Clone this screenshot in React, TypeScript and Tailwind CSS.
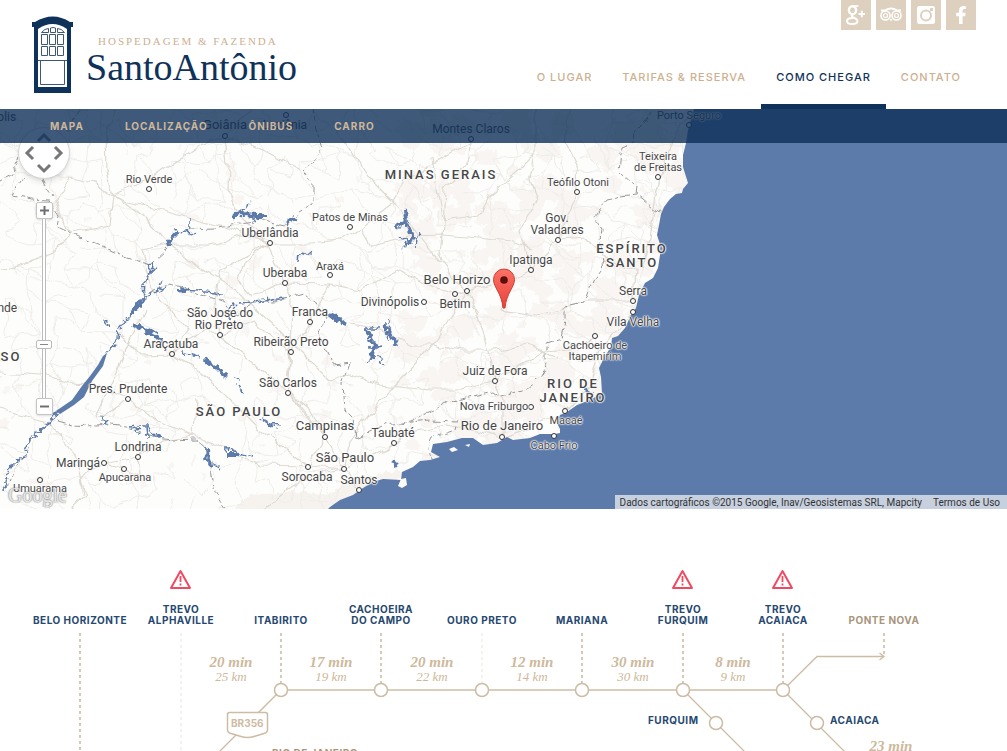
import React from "react";
import { FaFacebookF } from "react-icons/fa";

const MAP_TOP = 109;

function seeded(seed: number) {
  let s = seed;
  return () => {
    s = (s * 16807) % 2147483647;
    return s / 2147483647;
  };
}

function buildMinorRoads() {
  const rand = seeded(4127);
  const step = 17;
  const cols = 43;
  const rows = 25;
  const pts: number[][][] = [];
  for (let r = 0; r < rows; r++) {
    const row: number[][] = [];
    for (let c = 0; c < cols; c++) {
      row.push([
        Math.round(c * step + rand() * 15 - 7),
        Math.round(MAP_TOP + r * step + rand() * 15 - 7),
      ]);
    }
    pts.push(row);
  }
  let d = "";
  const link = (a: number[], b: number[]) => {
    const mx = Math.round((a[0] + b[0]) / 2 + rand() * 6 - 3);
    const my = Math.round((a[1] + b[1]) / 2 + rand() * 6 - 3);
    d += `M${a[0]} ${a[1]}Q${mx} ${my} ${b[0]} ${b[1]}`;
  };
  for (let r = 0; r < rows - 1; r++) {
    for (let c = 0; c < cols - 1; c++) {
      if (rand() < 0.5) link(pts[r][c], pts[r][c + 1]);
      if (rand() < 0.5) link(pts[r][c], pts[r + 1][c]);
      if (rand() < 0.22) link(pts[r][c], pts[r + 1][c + 1]);
    }
  }
  return d;
}

function buildTerrain() {
  const rand = seeded(991);
  let d = "";
  for (let i = 0; i < 330; i++) {
    const east = rand() < 0.86;
    const cx = east ? 400 + rand() * 290 : rand() * 400;
    const cy = MAP_TOP + rand() * 400;
    const size = east ? 5 + rand() * 14 : 3 + rand() * 6;
    for (let k = 0; k < 9; k++) {
      const a = (k / 9) * Math.PI * 2;
      const rr = size * (0.45 + rand() * 0.8);
      d += `${k === 0 ? "M" : "L"}${Math.round(cx + Math.cos(a) * rr)} ${Math.round(
        cy + Math.sin(a) * rr * 0.8,
      )}`;
    }
    d += "Z";
  }
  return d;
}

const MINOR_ROADS = buildMinorRoads();
const TERRAIN = buildTerrain();

const MAIN_ROADS = [
  "M114 109 106 135 107 170 113 194 127 202 150 207 190 217 230 228 270 243",
  "M113 194 146 218 165 240 200 268 235 290 270 322 300 350 330 380",
  "M113 194 95 183 70 178 55 200 65 225 72 232 110 225 113 194",
  "M0 272 30 262 52 252 70 237 72 232",
  "M113 194 150 180 170 165 195 148 225 133 240 120 250 109",
  "M225 136 228 165 227 190 240 215 265 240 285 283 292 300 290 350 288 392 310 420 325 437",
  "M225 136 250 145 262 150 300 170",
  "M270 243 310 243 340 240 360 228 390 205 405 180 430 165 471 140",
  "M270 243 245 262 238 280 252 295 285 283",
  "M285 283 331 284 360 290 400 270 425 285 455 294 467 291",
  "M471 140 470 160 445 190 443 225 440 255 455 280 467 291",
  "M360 228 370 245 410 236 443 235 480 238 510 242 532 250",
  "M467 291 500 283 531 270 558 240 578 193 577 165 565 140 570 109",
  "M558 240 585 238 610 262 635 270 633 300",
  "M467 291 480 320 490 355 495 381 503 400 503 437",
  "M467 291 450 320 432 345 405 375 380 400 350 440 344 469",
  "M344 469 385 450 410 432 445 425 480 432 503 437 530 428 565 412 590 385 600 350 620 325 633 313",
  "M344 469 325 437 309 466 344 469 360 489",
  "M344 469 310 475 280 495 265 509",
  "M325 437 300 405 288 393 291 352 310 322 331 284",
  "M220 335 250 360 280 385 310 410 325 437",
  "M172 354 200 372 225 395 260 430 309 466",
  "M118 333 140 355 172 354 205 330 220 335 252 320 290 352",
  "M128 399 105 415 95 418 112 380 130 340 145 310",
  "M128 399 155 420 194 435 230 450 260 465 309 466",
  "M104 463 138 457 165 440 194 435 196 400",
  "M104 463 80 480 85 495 70 509",
  "M138 457 140 475 125 470 104 463",
  "M0 372 40 375 70 383 90 384 128 399",
  "M0 410 50 423 75 455 82 495",
  "M172 354 190 330 160 300 148 280 140 250 168 245",
  "M168 245 210 245 240 235 270 243",
  "M270 243 220 270 215 300 220 335",
  "M330 120 370 180 395 205 430 250 442 262",
  "M432 157 438 195 443 220 480 215 490 195 520 170 535 155 535 109",
  "M535 155 530 180 537 200 520 230 531 270",
  "M350 325 380 330 410 345 432 345 460 350 495 350 530 345 560 360",
  "M495 381 460 390 430 390 380 385 350 375 330 380",
  "M495 381 520 365 545 352 570 350 595 337",
  "M660 178 655 200 650 240 640 270",
  "M694 109 675 135 660 178",
  "M510 275 500 310 535 315 560 310 590 300 633 300",
];

const STATE_BORDERS = [
  "M80 109 70 120 66 133 M20 158 10 175 0 181 M22 176 12 195 32 199 50 200 60 215 58 226 80 237 100 245 125 257 148 265 152 262 165 250 171 244 M43 179 52 197",
  "M190 229 215 228 230 224 265 220 285 228 300 212 312 205 312 185 304 172 322 150 316 128 313 109",
  "M151 270 145 281 145 298 160 288 170 285 190 290 225 302 235 315 260 301 285 299 305 293 315 302 325 320 320 335 325 350 332 365 350 363 343 385 345 410 355 420 357 437",
  "M357 437 385 425 410 422 430 412 450 402 470 398 495 392 502 397 525 389 540 377 547 365 547 343 562 338 565 320 565 307 585 303 593 280 605 263 600 240 602 228 595 217 607 200 622 197 637 195 662 215",
  "M637 195 638 188 619 170 622 147 632 143 634 133 645 122 652 112",
  "M430 460 428 447 432 438 455 430 457 422 430 421 400 424",
  "M58 420 72 424 95 425 112 424 130 427 155 437 175 439 195 438 207 448 210 470 212 480 214 492 225 509",
  "M32 437 23 457 14 470 8 490",
];

const THIN_RIVERS =
  "M4 490 10 467 23 457 32 437 50 423 58 410 M107 353 117 340 118 330 133 312 M145 298 144 281 151 270 M151 270 155 268 M148 266 152 272 153 262 M145 298 155 292 166 286 M190 229 190 219 M179 231 191 233 M191 232 194 236 M240 214 242 209 250 203 M178 289 205 292 222 294 M299 253 298 263 M229 318 232 304 240 305 M241 303 265 301 285 298 M300 252 312 254 M184 352 200 357 M184 350 185 358 M240 384 243 394 M240 380 234 378 M103 320 109 326 M130 427 137 426 148 426 152 434 163 436 M147 427 148 438 M137 427 138 434 M226 454 227 447 243 455 253 458 M260 418 269 423 278 426 M268 424 275 428 M390 321 387 340 M365 328 378 328 M370 348 383 346 M373 352 368 362 M374 355 386 365 M400 236 409 241 403 247 M419 233 416 245 M157 286 164 281 M101 417 108 424 M250 216 256 222 M207 456 202 460 M212 462 218 468";
const WIDE_RIVERS =
  "M232 218 240 212 245 215 256 216 268 216 M168 246 173 236 179 231 M286 223 294 217 M145 298 137 308 130 312 M178 289 189 290 M133 325 145 330 155 336 163 341 M203 359 212 364 227 377 M384 325 391 335 396 344 M366 329 370 337 M370 338 375 345 372 360 M207 447 208 460 212 468 M226 455 240 455 M330 313 345 324 M392 460 397 468 M405 210 406 221 396 228 M406 222 413 237 410 244 M585 391 591 393 590 400";

const COAST =
  "M694 109 691 120 688 130 686 143 683 155 683 167 688 183 683 189 682 193 676 194 670 199 664 207 661 214 659 225 657 235 660 244 660 255 658 268 653 278 645 283 639 295 636 308 631 315 625 328 618 336 612 338 611 347 603 359 602 362 599 368 601 377 602 393 590 400 577 405 567 412 560 415 557 423 560 429 560 433 555 434 540 434 530 438 513 440 507 437 497 443 483 445 473 438 462 438 447 442 433 444 431 452 440 457 430 460 420 461 413 467 402 472 401 480 383 479 373 482 363 488 353 495 340 500 330 507 328 509 1200 509 1200 109Z";

type Place = { x: number; y: number; text: string; dot?: [number, number]; big?: boolean };

const PLACES: Place[] = [
  { x: 0, y: 117, text: "ópolis" },
  { x: 225, y: 125, text: "Goiânia", dot: [225, 136], big: true },
  { x: 285, y: 125, text: "Luziânia", dot: [286, 115] },
  { x: 471, y: 129, text: "Montes Claros", dot: [471, 139] },
  { x: 689, y: 116, text: "Porto Seguro", dot: [689, 125] },
  { x: 149, y: 180, text: "Rio Verde", dot: [149, 189] },
  { x: 350, y: 218, text: "Patos de Minas", dot: [350, 227] },
  { x: 270, y: 233, text: "Uberlândia", dot: [270, 243] },
  { x: 285, y: 273, text: "Uberaba", dot: [285, 283] },
  { x: 330, y: 267, text: "Araxá", dot: [330, 275] },
  { x: 578, y: 183, text: "Teófilo Otoni", dot: [577, 192] },
  { x: 658, y: 157, text: "Teixeira" },
  { x: 658, y: 168, text: "de Freitas", dot: [658, 177] },
  { x: 557, y: 218, text: "Gov." },
  { x: 557, y: 230, text: "Valadares", dot: [558, 240] },
  { x: 531, y: 260, text: "Ipatinga", dot: [531, 270] },
  { x: 457, y: 280, text: "Belo Horizo", dot: [467, 291], big: true },
  { x: 455, y: 304, text: "Betim", dot: [455, 294] },
  { x: 390, y: 302, text: "Divinópolis", dot: [424, 302] },
  { x: 310, y: 312, text: "Franca", dot: [310, 322] },
  { x: 220, y: 313, text: "São José do" },
  { x: 219, y: 325, text: "Rio Preto", dot: [220, 335] },
  { x: 171, y: 344, text: "Araçatuba", dot: [172, 354] },
  { x: 291, y: 342, text: "Ribeirão Preto", dot: [291, 352] },
  { x: 288, y: 383, text: "São Carlos", dot: [288, 393] },
  { x: 128, y: 389, text: "Pres. Prudente", dot: [128, 399] },
  { x: 4, y: 308, text: "ande" },
  { x: 633, y: 291, text: "Serra", dot: [633, 301] },
  { x: 633, y: 322, text: "Vila Velha", dot: [633, 312] },
  { x: 595, y: 346, text: "Cachoeiro de", dot: [595, 336] },
  { x: 595, y: 357, text: "Itapemirim" },
  { x: 495, y: 371, text: "Juiz de Fora", dot: [495, 381] },
  { x: 494, y: 407, text: "Nova Friburgo", dot: [531, 407] },
  { x: 502, y: 426, text: "Rio de Janeiro", dot: [502, 437], big: true },
  { x: 566, y: 421, text: "Macaé", dot: [565, 411] },
  { x: 554, y: 446, text: "Cabo Frio", dot: [554, 436] },
  { x: 325, y: 426, text: "Campinas", dot: [325, 437], big: true },
  { x: 393, y: 433, text: "Taubaté", dot: [394, 443] },
  { x: 345, y: 458, text: "São Paulo", dot: [344, 469], big: true },
  { x: 359, y: 480, text: "Santos", dot: [359, 490] },
  { x: 307, y: 477, text: "Sorocaba", dot: [308, 467] },
  { x: 138, y: 447, text: "Londrina", dot: [138, 457] },
  { x: 78, y: 463, text: "Maringá", dot: [104, 463] },
  { x: 125, y: 478, text: "Apucarana", dot: [124, 469] },
  { x: 40, y: 489, text: "Umuarama", dot: [40, 480] },
];

const SMALL_PLACES = new Set([
  "Porto Seguro", "Rio Verde", "Patos de Minas", "Araxá", "Teófilo Otoni", "Teixeira",
  "de Freitas", "Cachoeiro de", "Itapemirim", "Nova Friburgo", "Macaé",
  "Cabo Frio", "Apucarana", "Umuarama",
]);

const STATES = [
  { x: 441, y: 175, text: "MINAS GERAIS" },
  { x: 632, y: 249, text: "ESPÍRITO" },
  { x: 632, y: 263, text: "SANTO" },
  { x: 573, y: 384, text: "RIO DE" },
  { x: 573, y: 398, text: "JANEIRO" },
  { x: 239, y: 412, text: "SÃO PAULO" },
  { x: 11, y: 357, text: "SO" },
];

const MAP_TEXT =
  "absolute -translate-x-1/2 -translate-y-1/2 whitespace-nowrap font-['Roboto',sans-serif] leading-3 text-[#464646] [text-shadow:0_0_2px_#fff,0_0_2px_#fff,0_0_2px_#fff,0_0_1px_#fff,0_0_1px_#fff]";

function Logo() {
  return (
    <a href="#inicio" className="flex items-start pt-4 pl-8 text-[#0f325a]">
      <svg width="42" height="78" viewBox="0 0 42 78" aria-hidden="true">
        <path d="M0 6h3Q21-5 38 6h3v5h-2v66H2V11H0z" fill="#0f325a" />
        <path d="M6 13Q20.500 3 35 13v58H6z" fill="#fff" />
        <g fill="none" stroke="#3c5878" strokeWidth="1">
          <path d="M9.500 16.500q3-4 7-4v4zM18.500 12q2.500-1 5 0v4.500h-5zM25.500 12.500q4 0 7 4h-7z" />
          <path d="M9.500 18.500h6v10h-6zM17.500 18.500h6v10h-6zM25.500 18.500h6v10h-6z" />
          <path d="M9.500 30.500h6v9h-6zM17.500 30.500h6v9h-6zM25.500 30.500h6v9h-6z" />
          <path d="M6 44.500h29M8.500 45v23.500h24V45" />
        </g>
      </svg>
      <span className="flex flex-col pt-[19px] pl-3 font-['Liberation_Serif',serif]">
        <span className="pl-3 text-[11px] leading-3 tracking-[2px] whitespace-nowrap text-[#cbb092]">
          HOSPEDAGEM &amp; FAZENDA
        </span>
        <span className="text-[38px] leading-10 whitespace-nowrap">SantoAntônio</span>
      </span>
    </a>
  );
}

function GooglePlusIcon() {
  return (
    <svg width="20" height="20" viewBox="0 0 20 20" fill="none" stroke="#fff" aria-hidden="true">
      <ellipse cx="6.500" cy="5.200" rx="3.600" ry="4" strokeWidth="2.400" />
      <path d="M6.500 1h6" strokeWidth="1.600" />
      <path d="M7.500 9.200q-3 1.300-1 2.800 5 2 5 4 0 3-5.500 3-5 0-5-3 0-3 6-3" strokeWidth="2" />
      <path d="M12.500 9h6.500M15.800 5.800v6.500" strokeWidth="1.800" />
    </svg>
  );
}

function TripIcon() {
  return (
    <svg width="22" height="16" viewBox="0 0 22 16" fill="none" stroke="#fff" aria-hidden="true">
      <path d="M1 3.500h4q6-4 12 0h4" strokeWidth="1.800" />
      <circle cx="5.500" cy="8.500" r="4.500" strokeWidth="1.600" />
      <circle cx="16.500" cy="8.500" r="4.500" strokeWidth="1.600" />
      <circle cx="5.500" cy="8.500" r="2" strokeWidth="1.200" />
      <circle cx="16.500" cy="8.500" r="2" strokeWidth="1.200" />
      <path d="m9.500 12 1.500 2.500 1.500-2.500z" fill="#fff" stroke="none" />
    </svg>
  );
}

function InstagramIcon() {
  return (
    <svg width="18" height="18" viewBox="0 0 18 18" aria-hidden="true">
      <rect width="18" height="18" rx="2.500" fill="#fff" />
      <circle cx="9" cy="9.500" r="5" fill="none" stroke="#ddd0be" strokeWidth="2" />
      <rect x="13" y="2" width="3" height="3" rx="0.500" fill="#ddd0be" />
    </svg>
  );
}

const SOCIAL = [
  { label: "Google+", icon: <GooglePlusIcon /> },
  { label: "TripAdvisor", icon: <TripIcon /> },
  { label: "Instagram", icon: <InstagramIcon /> },
  { label: "Facebook", icon: <FaFacebookF size={18} /> },
];

const NAV = ["O LUGAR", "TARIFAS & RESERVA", "COMO CHEGAR", "CONTATO"];
const SUBNAV = ["MAPA", "LOCALIZAÇÃO", "ÔNIBUS", "CARRO"];

function Header() {
  return (
    <header className="flex h-[109px] shrink-0 justify-between bg-white">
      <Logo />
      <div className="flex flex-col items-end justify-between pr-[31px]">
        <div className="flex gap-[5px]">
          {SOCIAL.map((s) => (
            <a
              key={s.label}
              href="#social"
              aria-label={s.label}
              className="flex size-[30px] items-center justify-center bg-[#ddd0be] text-white"
            >
              {s.icon}
            </a>
          ))}
        </div>
        <nav className="flex font-['Inter',sans-serif] text-[11px] leading-4 font-medium tracking-[1px]">
          {NAV.map((n) => (
            <a
              key={n}
              href="#pagina"
              className={
                n === "COMO CHEGAR"
                  ? "border-b-[5px] border-[#0f325a] px-[15px] pb-[19px] whitespace-nowrap text-[#0f325a]"
                  : "border-b-[5px] border-transparent px-[15px] pb-[19px] whitespace-nowrap text-[#cdb08f]"
              }
            >
              {n}
            </a>
          ))}
        </nav>
      </div>
    </header>
  );
}

function MapDrawing() {
  return (
    <svg
      className="absolute top-0 left-0"
      width="1200"
      height="400"
      viewBox="0 109 1200 400"
      fill="none"
      aria-hidden="true"
    >
      <defs>
        <filter id="rough" filterUnits="userSpaceOnUse" x="0" y="109" width="1200" height="400">
          <feTurbulence type="fractalNoise" baseFrequency="0.18" numOctaves="2" seed="4" />
          <feDisplacementMap in="SourceGraphic" scale="9" xChannelSelector="R" yChannelSelector="G" />
        </filter>
        <filter id="wavy" filterUnits="userSpaceOnUse" x="0" y="109" width="1200" height="400">
          <feTurbulence type="fractalNoise" baseFrequency="0.06" numOctaves="2" seed="9" />
          <feDisplacementMap in="SourceGraphic" scale="10" xChannelSelector="R" yChannelSelector="G" />
        </filter>
      </defs>
      <rect y="109" width="1200" height="400" fill="#fdfdfc" />
      <g filter="url(#rough)">
        <path d={TERRAIN} fill="#f8f5f2" />
        <path d="M225 515 250 495 290 492 330 495 350 480 400 470 400 515Z" fill="#f6f2ee" />
      </g>
      <g filter="url(#wavy)">
        <path d={MINOR_ROADS} stroke="#efede9" />
        <path d={MAIN_ROADS.join(" ")} stroke="#dedad2" strokeWidth="1.200" strokeLinejoin="round" />
        <path d={STATE_BORDERS.join(" ")} stroke="#98989a" strokeDasharray="8 3 4 3" />
      </g>
      <g filter="url(#rough)">
        <path d={THIN_RIVERS} stroke="#5c7aaa" strokeWidth="1.500" />
        <path d={WIDE_RIVERS} stroke="#5c7aaa" strokeWidth="3.800" strokeLinejoin="bevel" />
      </g>
      <path
        d="M107 353 103 366 92 381 84 397 74 405 60 414 56 411 72 400 82 386 90 376 98 365 103 356Z"
        fill="#5c7aaa"
      />
      <path d={COAST} fill="#5c7aaa" />
      <path d="M401 479 406 478 407 485 402 488 398 486ZM449 449 454 447 458 450 452 452ZM465 445 470 444 469 447Z" fill="#fbfaf8" />
    </svg>
  );
}

const CONTROL =
  "flex size-[17px] items-center justify-center rounded-xs border border-[#c5c5c5] bg-white text-[#707070] shadow-sm";

function MapControls() {
  return (
    <div className="absolute top-[18px] left-[18px] flex w-[52px] flex-col items-center">
      <button
        type="button"
        aria-label="Mover o mapa"
        className="size-[52px] rounded-full border border-[#d5d5d5] bg-white shadow-md"
      >
        <svg viewBox="0 0 50 50" fill="none" stroke="#777" strokeWidth="3" aria-hidden="true">
          <path d="m14 19-6 6 6 6M36 19l6 6-6 6M19 13l6-6 6 6M19 37l6 6 6-6" />
        </svg>
      </button>
      <button type="button" aria-label="Aumentar o zoom" className={`mt-[23px] ${CONTROL}`}>
        <svg width="9" height="9" viewBox="0 0 9 9" stroke="currentColor" strokeWidth="2" aria-hidden="true">
          <path d="M0 4.500h9M4.500 0v9" />
        </svg>
      </button>
      <input
        type="range"
        aria-label="Nível de zoom"
        defaultValue={29}
        className="h-[179px] w-4 appearance-none bg-transparent [direction:rtl] [writing-mode:vertical-lr] [&::-webkit-slider-runnable-track]:bg-[linear-gradient(90deg,transparent_6px,#bbb_6px,#bbb_7px,#fff_7px,#fff_9px,#bbb_9px,#bbb_10px,transparent_10px)] [&::-webkit-slider-thumb]:h-[9px] [&::-webkit-slider-thumb]:w-4 [&::-webkit-slider-thumb]:appearance-none [&::-webkit-slider-thumb]:rounded-xs [&::-webkit-slider-thumb]:border [&::-webkit-slider-thumb]:border-[#bbb] [&::-webkit-slider-thumb]:bg-[linear-gradient(90deg,#fff_3px,transparent_3px,transparent_11px,#fff_11px),linear-gradient(#fff_3px,#888_3px,#888_4px,#fff_4px)]"
      />
      <button type="button" aria-label="Diminuir o zoom" className={CONTROL}>
        <svg width="9" height="9" viewBox="0 0 9 9" stroke="currentColor" strokeWidth="2" aria-hidden="true">
          <path d="M0 4.500h9" />
        </svg>
      </button>
    </div>
  );
}

function MapSection() {
  return (
    <section className="relative h-[400px] shrink-0 overflow-hidden bg-[#5c7aaa]">
      <MapDrawing />
      {PLACES.map((p) => (
        <React.Fragment key={p.text}>
          {p.dot && (
            <span
              className="absolute size-[6px] -translate-1/2 rounded-full border border-[#333] bg-white"
              style={{ left: p.dot[0], top: p.dot[1] - MAP_TOP }}
            />
          )}
          <span
            className={
              p.big
                ? `${MAP_TEXT} text-[13px]`
                : SMALL_PLACES.has(p.text)
                  ? `${MAP_TEXT} text-[11px]`
                  : `${MAP_TEXT} text-[12px]`
            }
            style={{ left: p.x, top: p.y - MAP_TOP }}
          >
            {p.text}
          </span>
        </React.Fragment>
      ))}
      {STATES.map((s) => (
        <span
          key={s.text}
          className={`${MAP_TEXT} text-[13px] font-medium tracking-[2px]`}
          style={{ left: s.x, top: s.y - MAP_TOP }}
        >
          {s.text}
        </span>
      ))}
      <span className="absolute bottom-[2px] left-[8px] font-['Liberation_Serif',serif] text-[20px] leading-6 text-white/80 [text-shadow:0_0_2px_#777,0_0_1px_#999]">
        Google
      </span>
      <svg
        className="absolute top-[159px] left-[492px]"
        width="24"
        height="42"
        viewBox="0 0 24 42"
        role="img"
        aria-label="Pousada Santo Antônio"
      >
        <defs>
          <linearGradient id="pin" x1="0" y1="0" x2="0" y2="1">
            <stop offset="0" stopColor="#fc7267" />
            <stop offset="1" stopColor="#e9423a" />
          </linearGradient>
        </defs>
        <path
          d="M12 1a10.500 10.500 0 0 1 10.500 10.500c0 8-8 13-9.500 28.500h-2C9.500 24.500 1.500 19.500 1.500 11.500A10.500 10.500 0 0 1 12 1z"
          fill="url(#pin)"
          stroke="#cb4037"
        />
        <circle cx="12" cy="12" r="3.800" fill="#590f0c" />
      </svg>
      <MapControls />
      <nav className="absolute inset-x-0 top-0 flex h-[34px] items-center gap-[41px] bg-[#0e3058]/80 pl-[50px] font-['Inter',sans-serif] text-[10px] font-bold tracking-[1px] text-[#cfb79c]">
        {SUBNAV.map((n) => (
          <a key={n} href="#secao">
            {n}
          </a>
        ))}
      </nav>
      <div className="absolute right-0 bottom-0 flex h-[14px] items-center gap-[11px] bg-[#f5f5f5]/70 pr-[7px] pl-[5px] font-['Roboto',sans-serif] text-[10px] whitespace-nowrap text-[#333]">
        <span>Dados cartográficos ©2015 Google, Inav/Geosistemas SRL, Mapcity</span>
        <a href="#termos">Termos de Uso</a>
      </div>
    </section>
  );
}

type Stop = { x: number; lines: string[]; alert?: boolean; faint?: boolean; muted?: boolean };

const STOPS: Stop[] = [
  { x: 80, lines: ["BELO HORIZONTE"] },
  { x: 181, lines: ["TREVO", "ALPHAVILLE"], alert: true, faint: true },
  { x: 281, lines: ["ITABIRITO"] },
  { x: 381, lines: ["CACHOEIRA", "DO CAMPO"] },
  { x: 482, lines: ["OURO PRETO"], faint: true },
  { x: 582, lines: ["MARIANA"] },
  { x: 683, lines: ["TREVO", "FURQUIM"], alert: true },
  { x: 783, lines: ["TREVO", "ACAIACA"], alert: true },
  { x: 884, lines: ["PONTE NOVA"], muted: true },
];

const LEGS = [
  { x: 231, y: 145, time: "20 min", km: "25 km" },
  { x: 331, y: 145, time: "17 min", km: "19 km" },
  { x: 432, y: 145, time: "20 min", km: "22 km" },
  { x: 532, y: 145, time: "12 min", km: "14 km" },
  { x: 633, y: 145, time: "30 min", km: "30 km" },
  { x: 733, y: 145, time: "8 min", km: "9 km" },
  { x: 891, y: 229, time: "23 min", km: "22 km" },
];

const LABEL_TEXT = "absolute font-['Inter',sans-serif] text-[10px] leading-[11px] font-bold whitespace-nowrap";
const STOP_TEXT = `${LABEL_TEXT} tracking-[0.5px]`;

function RouteDiagram() {
  return (
    <section className="relative min-h-0 flex-1 overflow-hidden bg-white">
      <svg
        className="absolute top-0 left-0"
        width="1007"
        height="300"
        viewBox="0 509 1007 300"
        fill="none"
        stroke="#cdbba3"
        aria-hidden="true"
      >
        {STOPS.map((s) => (
          <path
            key={s.x}
            d={`M${s.x} 633V${s.x < 200 ? 809 : s.x === 884 ? 654 : 683}`}
            stroke={s.faint ? "#ebe5dc" : "#d3c4ae"}
            strokeDasharray="3 3"
            strokeWidth={s.faint ? 1 : 1.8}
          />
        ))}
        <path d="M162 809 281 690" strokeWidth="1.300" />
        <path d="M281 690H783" strokeWidth="1.800" stroke="#d9cdbb" />
        <path d="M683 690 802 809M783 690 902 809M783 690 817 656.500H884M879.500 653l4.500 3.500-4.500 3.500" strokeWidth="1.300" />
        <g fill="#fff" strokeWidth="1.500">
          {[281, 381, 482, 582, 683, 783].map((x) => (
            <circle key={x} cx={x} cy="690" r="6.500" />
          ))}
          <circle cx="716" cy="723" r="6.500" />
          <circle cx="817" cy="723" r="6.500" />
          <path d="M229.500 712.500h36q2 0 2 2v15.500q0 2-2 3L254 736.500q-6.500 2-13 0L229.500 733q-2-1-2-3v-15.500q0-2 2-2z" />
        </g>
        {STOPS.filter((s) => s.alert).map((s) => (
          <g key={s.x} stroke="#f04a63" strokeWidth="2" strokeLinejoin="round">
            <path d={`M${s.x - 0.5} 571 l9.500 17 h-19 z`} />
            <path d={`M${s.x - 0.5} 576v6M${s.x - 0.5} 583.500v2`} strokeWidth="1.800" />
          </g>
        ))}
      </svg>
      {STOPS.map((s) => (
        <div
          key={s.x}
          className={
            s.muted
              ? `${STOP_TEXT} -translate-x-1/2 -translate-y-full text-center text-[#a8957c]`
              : `${STOP_TEXT} -translate-x-1/2 -translate-y-full text-center text-[#264870]`
          }
          style={{ left: s.x, top: 117 }}
        >
          {s.lines.map((l) => (
            <div key={l}>{l}</div>
          ))}
        </div>
      ))}
      {LEGS.map((l) => (
        <div
          key={l.x}
          className="absolute -translate-x-1/2 text-center font-['Liberation_Serif',serif] whitespace-nowrap text-[#cdb99c] italic"
          style={{ left: l.x, top: l.y }}
        >
          <div className="text-[15px] leading-4 font-bold">{l.time}</div>
          <div className="text-[13px] leading-[13px]">{l.km}</div>
        </div>
      ))}
      <span className={`${STOP_TEXT} top-[206px] left-[648px] text-[#264870]`}>FURQUIM</span>
      <span className={`${STOP_TEXT} top-[206px] left-[830px] text-[#264870]`}>ACAIACA</span>
      <span className={`${LABEL_TEXT} top-[209px] left-[231px] text-[#cdbba3]`}>BR356</span>
      <span className={`${STOP_TEXT} top-[239px] left-[272px] text-[#a8957c]`}>RIO DE JANEIRO</span>
    </section>
  );
}

export default function App() {
  return (
    <main className="flex h-screen flex-col overflow-hidden bg-white">
      <Header />
      <MapSection />
      <RouteDiagram />
    </main>
  );
}
